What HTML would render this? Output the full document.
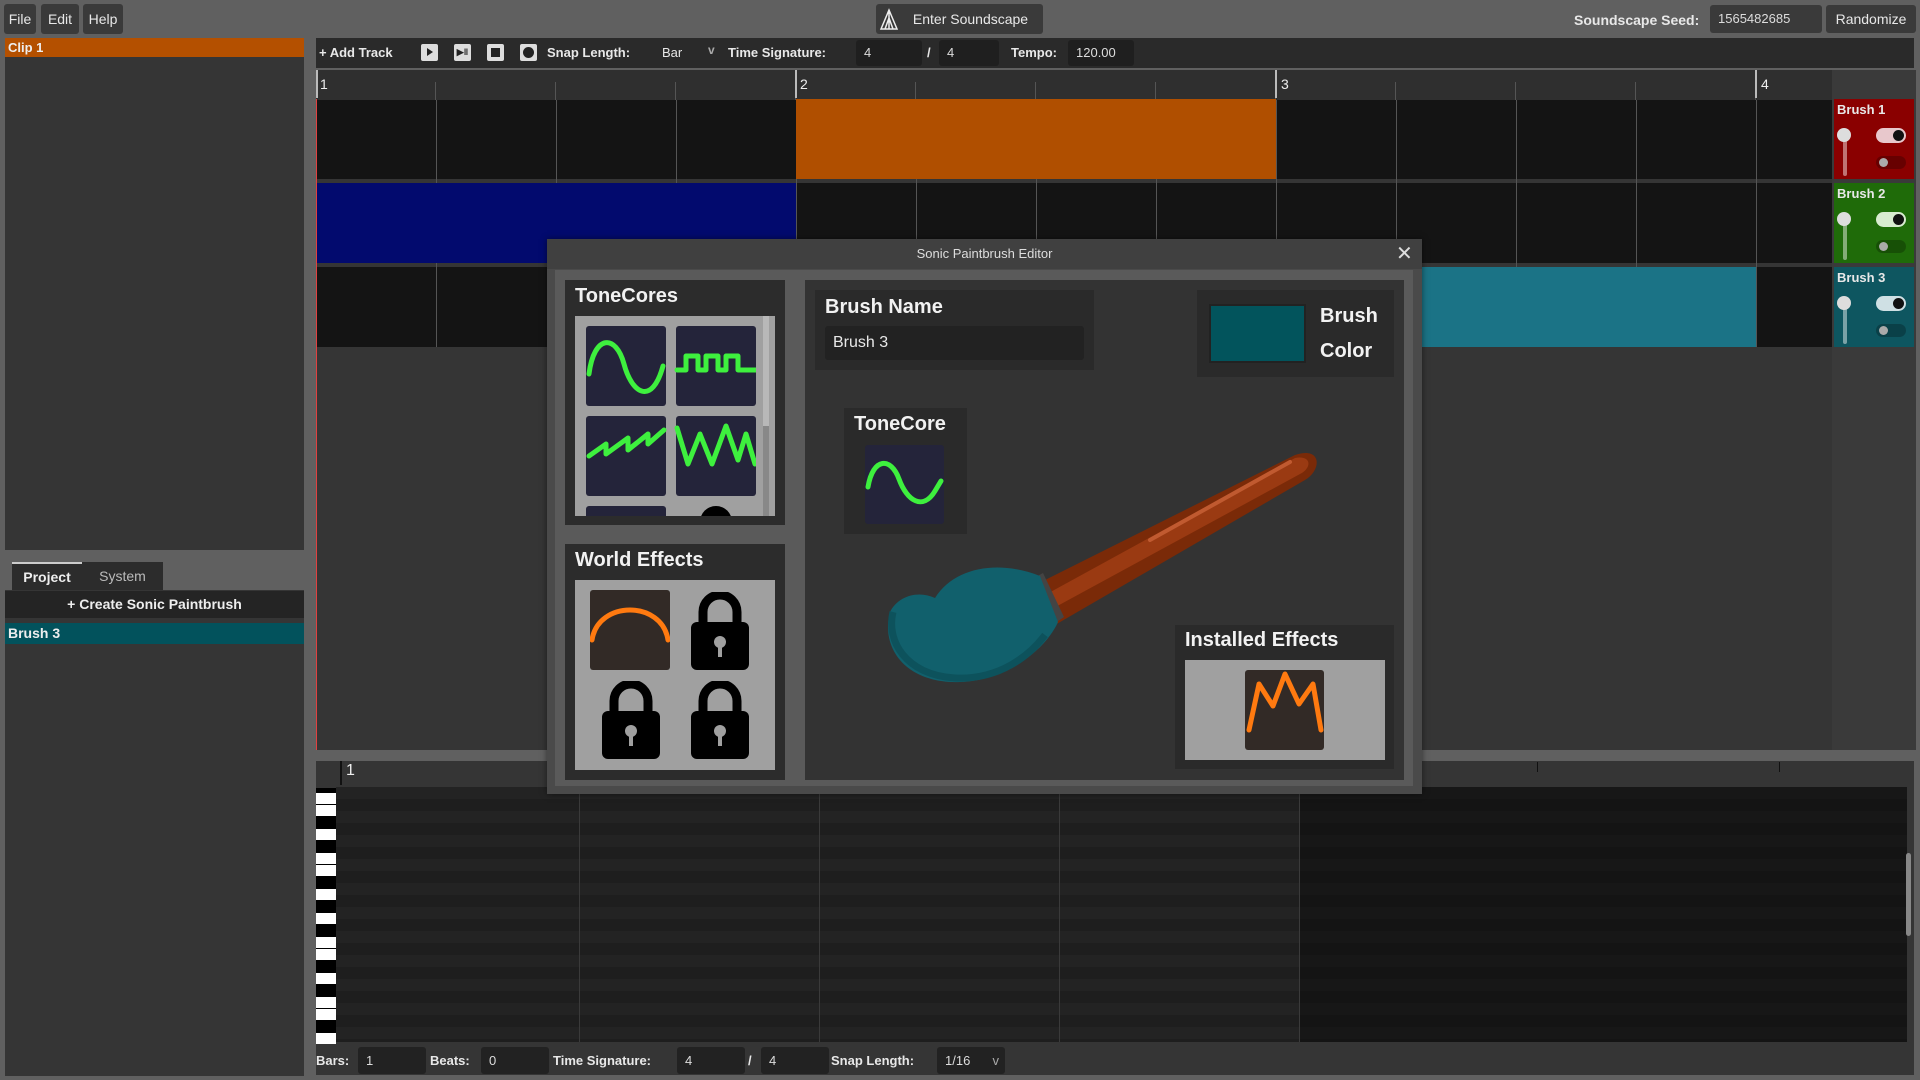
<!DOCTYPE html>
<html><head><meta charset="utf-8"><style>
*{box-sizing:border-box;margin:0;padding:0}
body{width:1920px;height:1080px;background:#606060;font-family:"Liberation Sans",sans-serif;color:#eee;position:relative;overflow:hidden;font-size:14px}
.a{position:absolute}
.btn{position:absolute;background:#3a3a3a;border-radius:3px;color:#e8e8e8;font-size:14px;line-height:30px;text-align:center}
.lbl{position:absolute;font-size:14px;font-weight:bold;color:#e8e8e8;white-space:nowrap}
.inp{position:absolute;background:#222;border-radius:3px;font-size:13px;color:#ddd;padding-left:8px}
.h{position:absolute;font-weight:bold;font-size:20px;color:#f2f2f2;white-space:nowrap}
.tile{position:absolute;background:#24243a;border-radius:3px}
</style></head><body>
<div class="btn" style="left:4px;top:4px;width:32px;height:30px">File</div>
<div class="btn" style="left:41px;top:4px;width:38px;height:30px">Edit</div>
<div class="btn" style="left:83px;top:4px;width:40px;height:30px">Help</div>
<div class="btn" style="left:876px;top:4px;width:167px;height:30px;padding-left:22px">Enter Soundscape</div>
<svg class="a" style="left:879px;top:8px" width="24" height="22" viewBox="0 0 24 22"><path d="M2 21 L10 2 L18 21 Z M6 21 L10 10 L14 21 M10 2 L10 21" fill="none" stroke="#eee" stroke-width="1.5"/></svg>
<div class="lbl" style="left:1574px;top:12px">Soundscape Seed:</div>
<div class="inp" style="left:1710px;top:5px;width:112px;height:28px;line-height:28px;background:#3a3a3a">1565482685</div>
<div class="btn" style="left:1826px;top:5px;width:90px;height:28px;line-height:28px">Randomize</div>
<div class="a" style="left:5px;top:38px;width:299px;height:512px;background:#353535"></div>
<div class="a" style="left:5px;top:38px;width:299px;height:19px;background:#b45000;font-size:13px;font-weight:bold;padding-left:3px;line-height:19px">Clip 1</div>
<div class="a" style="left:12px;top:562px;width:70px;height:28px;background:#2c2c2c;border-top:2px solid #ccc;font-size:14px;font-weight:bold;text-align:center;line-height:26px">Project</div>
<div class="a" style="left:82px;top:562px;width:81px;height:28px;background:#2c2c2c;font-size:14px;color:#bbb;text-align:center;line-height:28px">System</div>
<div class="a" style="left:5px;top:590px;width:299px;height:486px;background:#353535"></div>
<div class="a" style="left:5px;top:591px;width:299px;height:27px;background:#242424;font-size:14px;font-weight:bold;text-align:center;line-height:27px">+ Create Sonic Paintbrush</div>
<div class="a" style="left:5px;top:623px;width:299px;height:21px;background:#02525c;font-size:14px;font-weight:bold;padding-left:3px;line-height:21px">Brush 3</div>
<div class="a" style="left:316px;top:38px;width:1598px;height:30px;background:#2a2a2a"></div>
<div class="lbl" style="left:319px;top:45px;font-size:13px">+ Add Track</div>
<div class="a" style="left:421px;top:44px;width:17px;height:17px;background:#ddd;border-radius:2px"><div style="margin:4px 0 0 6px;width:0;height:0;border-left:6px solid #222;border-top:4px solid transparent;border-bottom:4px solid transparent"></div></div>
<div class="a" style="left:454px;top:44px;width:17px;height:17px;background:#ddd;border-radius:2px;font-size:9px;color:#222;text-align:center;line-height:17px;font-weight:bold">▶‖</div>
<div class="a" style="left:487px;top:44px;width:17px;height:17px;background:#ddd;border-radius:2px"><div style="margin:4px;width:9px;height:9px;background:#222"></div></div>
<div class="a" style="left:520px;top:44px;width:17px;height:17px;background:#ddd;border-radius:2px"><div style="margin:3px;width:11px;height:11px;background:#222;border-radius:50%"></div></div>
<div class="lbl" style="left:547px;top:45px;font-size:13px">Snap Length:</div>
<div class="lbl" style="left:662px;top:45px;font-size:13px;font-weight:normal">Bar</div>
<div class="lbl" style="left:708px;top:43px;font-size:12px;color:#aaa">v</div>
<div class="lbl" style="left:728px;top:45px;font-size:13px">Time Signature:</div>
<div class="inp" style="left:856px;top:40px;width:66px;height:26px;line-height:26px;background:#1f1f1f">4</div>
<div class="lbl" style="left:927px;top:45px;font-size:13px">/</div>
<div class="inp" style="left:939px;top:40px;width:60px;height:26px;line-height:26px;background:#1f1f1f">4</div>
<div class="lbl" style="left:1011px;top:45px;font-size:13px">Tempo:</div>
<div class="inp" style="left:1068px;top:40px;width:66px;height:26px;line-height:26px;background:#1f1f1f">120.00</div>
<div class="a" style="left:316px;top:70px;width:1516px;height:680px;background:#353535"></div>
<div class="a" style="left:317px;top:99px;width:1515px;height:80px;background:#141414"></div>
<div class="a" style="left:317px;top:183px;width:1515px;height:80px;background:#141414"></div>
<div class="a" style="left:317px;top:267px;width:1515px;height:80px;background:#141414"></div>
<div class="a" style="left:317px;top:70px;width:1515px;height:277px;background:repeating-linear-gradient(90deg,transparent 0 119px,#555 119px 120px);"></div>
<div class="a" style="left:316px;top:70px;width:1516px;height:30px;background:#2f2f2f;background-image:repeating-linear-gradient(90deg,transparent 0 119px,#555 119px 120px);background-position:0 12px;background-repeat:repeat-x;background-size:120px 18px"></div>
<div class="a" style="left:320px;top:76px;font-size:14px">1</div>
<div class="a" style="left:800px;top:76px;font-size:14px">2</div>
<div class="a" style="left:1281px;top:76px;font-size:14px">3</div>
<div class="a" style="left:1761px;top:76px;font-size:14px">4</div>
<div class="a" style="left:316px;top:70px;width:2px;height:28px;background:#bbb"></div>
<div class="a" style="left:795px;top:70px;width:2px;height:28px;background:#bbb"></div>
<div class="a" style="left:1275px;top:70px;width:2px;height:28px;background:#bbb"></div>
<div class="a" style="left:1755px;top:70px;width:2px;height:28px;background:#bbb"></div>
<div class="a" style="left:796px;top:99px;width:480px;height:80px;background:#b04f00"></div>
<div class="a" style="left:317px;top:183px;width:479px;height:80px;background:#020a6e"></div>
<div class="a" style="left:1100px;top:267px;width:656px;height:80px;background:#1b7386"></div>
<div class="a" style="left:316px;top:99px;width:1px;height:651px;background:#e04040"></div>
<div class="a" style="left:1834px;top:99px;width:80px;height:80px;background:#8a0000"></div>
<div class="a" style="left:1834px;top:183px;width:80px;height:80px;background:#1f6b09"></div>
<div class="a" style="left:1834px;top:267px;width:80px;height:80px;background:#0e5660"></div>
<div class="a" style="left:1832px;top:70px;width:84px;height:680px;background:#3a3a3a;z-index:-1"></div>
<div class="lbl" style="left:1837px;top:102px;font-size:13px">Brush 1</div>
<div class="lbl" style="left:1837px;top:186px;font-size:13px">Brush 2</div>
<div class="lbl" style="left:1837px;top:270px;font-size:13px">Brush 3</div>
<div class="a" style="left:1843px;top:130px;width:4px;height:46px;background:rgba(255,255,255,.45);border-radius:2px"></div>
<div class="a" style="left:1837px;top:128px;width:14px;height:14px;background:#ddd;border-radius:50%"></div>
<div class="a" style="left:1876px;top:128px;width:30px;height:15px;background:#e8c8cc;border-radius:8px"><div style="margin:2px 0 0 17px;width:11px;height:11px;background:#111;border-radius:50%"></div></div>
<div class="a" style="left:1876px;top:156px;width:30px;height:13px;background:rgba(0,0,0,.25);border-radius:7px"><div style="margin:2px 0 0 3px;width:9px;height:9px;background:#aaa;border-radius:50%"></div></div>
<div class="a" style="left:1843px;top:214px;width:4px;height:46px;background:rgba(255,255,255,.45);border-radius:2px"></div>
<div class="a" style="left:1837px;top:212px;width:14px;height:14px;background:#ddd;border-radius:50%"></div>
<div class="a" style="left:1876px;top:212px;width:30px;height:15px;background:#d8ecd0;border-radius:8px"><div style="margin:2px 0 0 17px;width:11px;height:11px;background:#111;border-radius:50%"></div></div>
<div class="a" style="left:1876px;top:240px;width:30px;height:13px;background:rgba(0,0,0,.25);border-radius:7px"><div style="margin:2px 0 0 3px;width:9px;height:9px;background:#aaa;border-radius:50%"></div></div>
<div class="a" style="left:1843px;top:298px;width:4px;height:46px;background:rgba(255,255,255,.45);border-radius:2px"></div>
<div class="a" style="left:1837px;top:296px;width:14px;height:14px;background:#ddd;border-radius:50%"></div>
<div class="a" style="left:1876px;top:296px;width:30px;height:15px;background:#cfe0e4;border-radius:8px"><div style="margin:2px 0 0 17px;width:11px;height:11px;background:#111;border-radius:50%"></div></div>
<div class="a" style="left:1876px;top:324px;width:30px;height:13px;background:rgba(0,0,0,.25);border-radius:7px"><div style="margin:2px 0 0 3px;width:9px;height:9px;background:#aaa;border-radius:50%"></div></div>
<div class="a" style="left:316px;top:761px;width:1598px;height:314px;background:#353535"></div>
<div class="a" style="left:340px;top:761px;width:2px;height:24px;background:#111"></div>
<div class="a" style="left:346px;top:762px;font-size:16px">1</div>
<div class="a" style="left:1537px;top:762px;width:1px;height:10px;background:#111"></div>
<div class="a" style="left:1779px;top:762px;width:1px;height:10px;background:#111"></div>
<div class="a" style="left:336px;top:787px;width:1571px;height:255px;background:repeating-linear-gradient(180deg,#232323 0 12px,#1e1e1e 12px 24px)"></div>
<div class="a" style="left:1300px;top:787px;width:607px;height:255px;background:repeating-linear-gradient(180deg,#171717 0 12px,#141414 12px 24px)"></div>
<div class="a" style="left:579px;top:787px;width:1px;height:255px;background:#3a3a3a"></div>
<div class="a" style="left:819px;top:787px;width:1px;height:255px;background:#3a3a3a"></div>
<div class="a" style="left:1059px;top:787px;width:1px;height:255px;background:#3a3a3a"></div>
<div class="a" style="left:1299px;top:787px;width:1px;height:255px;background:#3a3a3a"></div>
<div class="a" style="left:1906px;top:853px;width:5px;height:83px;background:#888;border-radius:3px"></div>
<div class="a" style="left:316px;top:788px;width:20px;height:254px;background:#000">
<div style="height:5px"></div>
<div style="height:11px;background:#fff;margin-bottom:1px"></div><div style="height:11px;background:#fff;margin-bottom:13px"></div>
<div style="height:11px;background:#fff;margin-bottom:13px"></div>
<div style="height:11px;background:#fff;margin-bottom:1px"></div><div style="height:11px;background:#fff;margin-bottom:13px"></div>
<div style="height:11px;background:#fff;margin-bottom:13px"></div>
<div style="height:11px;background:#fff;margin-bottom:13px"></div>
<div style="height:11px;background:#fff;margin-bottom:1px"></div><div style="height:11px;background:#fff;margin-bottom:13px"></div>
<div style="height:11px;background:#fff;margin-bottom:13px"></div>
<div style="height:11px;background:#fff;margin-bottom:1px"></div><div style="height:11px;background:#fff;margin-bottom:13px"></div>
<div style="height:11px;background:#fff"></div>
</div>
<div class="lbl" style="left:316px;top:1053px;font-size:13px">Bars:</div>
<div class="inp" style="left:358px;top:1047px;width:68px;height:27px;line-height:27px">1</div>
<div class="lbl" style="left:430px;top:1053px;font-size:13px">Beats:</div>
<div class="inp" style="left:481px;top:1047px;width:68px;height:27px;line-height:27px">0</div>
<div class="lbl" style="left:553px;top:1053px;font-size:13px">Time Signature:</div>
<div class="inp" style="left:677px;top:1047px;width:68px;height:27px;line-height:27px">4</div>
<div class="lbl" style="left:748px;top:1053px;font-size:13px">/</div>
<div class="inp" style="left:761px;top:1047px;width:68px;height:27px;line-height:27px">4</div>
<div class="lbl" style="left:831px;top:1053px;font-size:13px">Snap Length:</div>
<div class="inp" style="left:937px;top:1047px;width:68px;height:27px;line-height:27px">1/16 <span style="float:right;margin-right:6px;color:#aaa">v</span></div>
<div class="a" style="left:547px;top:239px;width:875px;height:555px;background:#4a4a4a;box-shadow:0 0 6px rgba(0,0,0,.5)"></div>
<div class="a" style="left:547px;top:239px;width:875px;height:30px;background:#404040;text-align:center;font-size:13px;line-height:30px;color:#ddd">Sonic Paintbrush Editor</div>
<div class="a" style="left:1396px;top:241px;font-size:20px;color:#ddd">✕</div>
<div class="a" style="left:555px;top:270px;width:858px;height:516px;background:#5a5a5a"></div>
<div class="a" style="left:565px;top:280px;width:220px;height:245px;background:#2c2c2c"></div>
<div class="h" style="left:575px;top:285px">ToneCores</div>
<div class="a" style="left:575px;top:316px;width:200px;height:200px;background:#a0a0a0;overflow:hidden">
<div class="tile" style="left:11px;top:10px;width:80px;height:80px"></div>
<div class="tile" style="left:101px;top:10px;width:80px;height:80px"></div>
<div class="tile" style="left:11px;top:100px;width:80px;height:80px"></div>
<div class="tile" style="left:101px;top:100px;width:80px;height:80px"></div>
<div class="tile" style="left:11px;top:190px;width:80px;height:80px"></div>
<div class="a" style="left:125px;top:190px;width:32px;height:32px;border-radius:50%;background:#000"></div>
<div class="a" style="left:188px;top:0;width:6px;height:200px;background:#888"></div>
<div class="a" style="left:188px;top:0;width:6px;height:110px;background:#b8b8b8"></div>
</div>
<svg class="a" style="left:586px;top:326px" width="170" height="170" viewBox="0 0 170 170" fill="none" stroke="#3ef03e" stroke-width="5" stroke-linecap="round" stroke-linejoin="round">
<path d="M3 48 C8 8 30 8 38 38 S66 80 77 40"/>
<path d="M91 44 L100 44 L100 30 L112 30 L112 44 L120 44 L120 30 L132 30 L132 44 L140 44 L140 30 L152 30 L152 44 L170 44"/>
<path d="M3 130 L20 118 L20 128 L42 112 L42 124 L62 108 L62 118 L78 104"/>
<path d="M91 102 L102 138 L114 108 L126 138 L140 100 L152 134 L160 108 L169 138"/>
</svg>
<div class="a" style="left:565px;top:544px;width:220px;height:236px;background:#2c2c2c"></div>
<div class="h" style="left:575px;top:549px">World Effects</div>
<div class="a" style="left:575px;top:580px;width:200px;height:190px;background:#a0a0a0"></div>
<div class="a" style="left:590px;top:590px;width:80px;height:80px;background:#322a26;border-radius:3px"></div>
<svg class="a" style="left:590px;top:590px" width="80" height="80"><path d="M2 50 C8 10 72 10 78 50" fill="none" stroke="#ff7a10" stroke-width="5" stroke-linecap="round"/></svg>
<svg class="a" style="left:690px;top:592px" width="60" height="80" viewBox="0 0 58 80"><path d="M12 32 V20 A17 17 0 0 1 46 20 V32" fill="none" stroke="#000" stroke-width="9"/><rect x="0" y="30" width="58" height="48" rx="6" fill="#000"/><circle cx="29" cy="50" r="6" fill="#a0a0a0"/><rect x="27" y="50" width="4" height="15" fill="#a0a0a0"/></svg>
<svg class="a" style="left:601px;top:681px" width="60" height="80" viewBox="0 0 58 80"><path d="M12 32 V20 A17 17 0 0 1 46 20 V32" fill="none" stroke="#000" stroke-width="9"/><rect x="0" y="30" width="58" height="48" rx="6" fill="#000"/><circle cx="29" cy="50" r="6" fill="#a0a0a0"/><rect x="27" y="50" width="4" height="15" fill="#a0a0a0"/></svg>
<svg class="a" style="left:690px;top:681px" width="60" height="80" viewBox="0 0 58 80"><path d="M12 32 V20 A17 17 0 0 1 46 20 V32" fill="none" stroke="#000" stroke-width="9"/><rect x="0" y="30" width="58" height="48" rx="6" fill="#000"/><circle cx="29" cy="50" r="6" fill="#a0a0a0"/><rect x="27" y="50" width="4" height="15" fill="#a0a0a0"/></svg>
<div class="a" style="left:805px;top:280px;width:599px;height:500px;background:#333"></div>
<div class="a" style="left:815px;top:290px;width:279px;height:80px;background:#2a2a2a"></div>
<div class="h" style="left:825px;top:296px">Brush Name</div>
<div class="inp" style="left:825px;top:326px;width:259px;height:34px;line-height:34px;font-size:16px;background:#222;color:#e8e8e8">Brush 3</div>
<div class="a" style="left:1197px;top:290px;width:197px;height:87px;background:#2a2a2a"></div>
<div class="a" style="left:1209px;top:304px;width:97px;height:59px;background:#02545c;border:2px solid #222"></div>
<div class="h" style="left:1320px;top:305px">Brush</div>
<div class="h" style="left:1320px;top:340px">Color</div>
<div class="a" style="left:844px;top:408px;width:123px;height:126px;background:#2a2a2a"></div>
<div class="h" style="left:854px;top:413px">ToneCore</div>
<div class="tile" style="left:865px;top:445px;width:79px;height:79px"></div>
<svg class="a" style="left:865px;top:445px" width="79" height="79" fill="none" stroke="#3ef03e" stroke-width="5" stroke-linecap="round"><path d="M3 42 C8 12 26 12 34 34 S58 66 70 46 L76 36"/></svg>
<svg class="a" style="left:870px;top:440px" width="460" height="250" viewBox="870 440 460 250">
<path d="M1035 585 L1295 455 C1322 446 1322 470 1305 480 L1055 625 Z" fill="#7a2a08"/>
<path d="M1045 595 L1295 458 C1312 455 1312 468 1300 474 L1050 610 Z" fill="#9a3a12"/>
<path d="M1150 540 L1290 462" stroke="#c05a30" stroke-width="4" stroke-linecap="round"/>
<path d="M1030 580 L1043 573 L1064 617 L1052 625 Z" fill="#444"/>
<path d="M1040 576 C1000 560 955 566 935 598 C918 590 898 596 890 612 C880 650 908 684 960 682 C1012 680 1048 645 1058 622 Z" fill="#11606c"/>
<path d="M893 612 C886 640 905 675 955 678 C1000 680 1030 655 1045 635" fill="none" stroke="#0d525c" stroke-width="7"/>
</svg>
<div class="a" style="left:1175px;top:625px;width:219px;height:144px;background:#2a2a2a"></div>
<div class="h" style="left:1185px;top:629px">Installed Effects</div>
<div class="a" style="left:1185px;top:660px;width:200px;height:100px;background:#a0a0a0"></div>
<div class="a" style="left:1245px;top:670px;width:79px;height:80px;background:#322a26;border-radius:3px"></div>
<svg class="a" style="left:1245px;top:670px" width="79" height="80" fill="none" stroke="#ff7a10" stroke-width="5" stroke-linecap="round" stroke-linejoin="round"><path d="M4 60 L14 14 L28 36 L40 4 L54 34 L68 14 L76 60"/></svg>
</body></html>
